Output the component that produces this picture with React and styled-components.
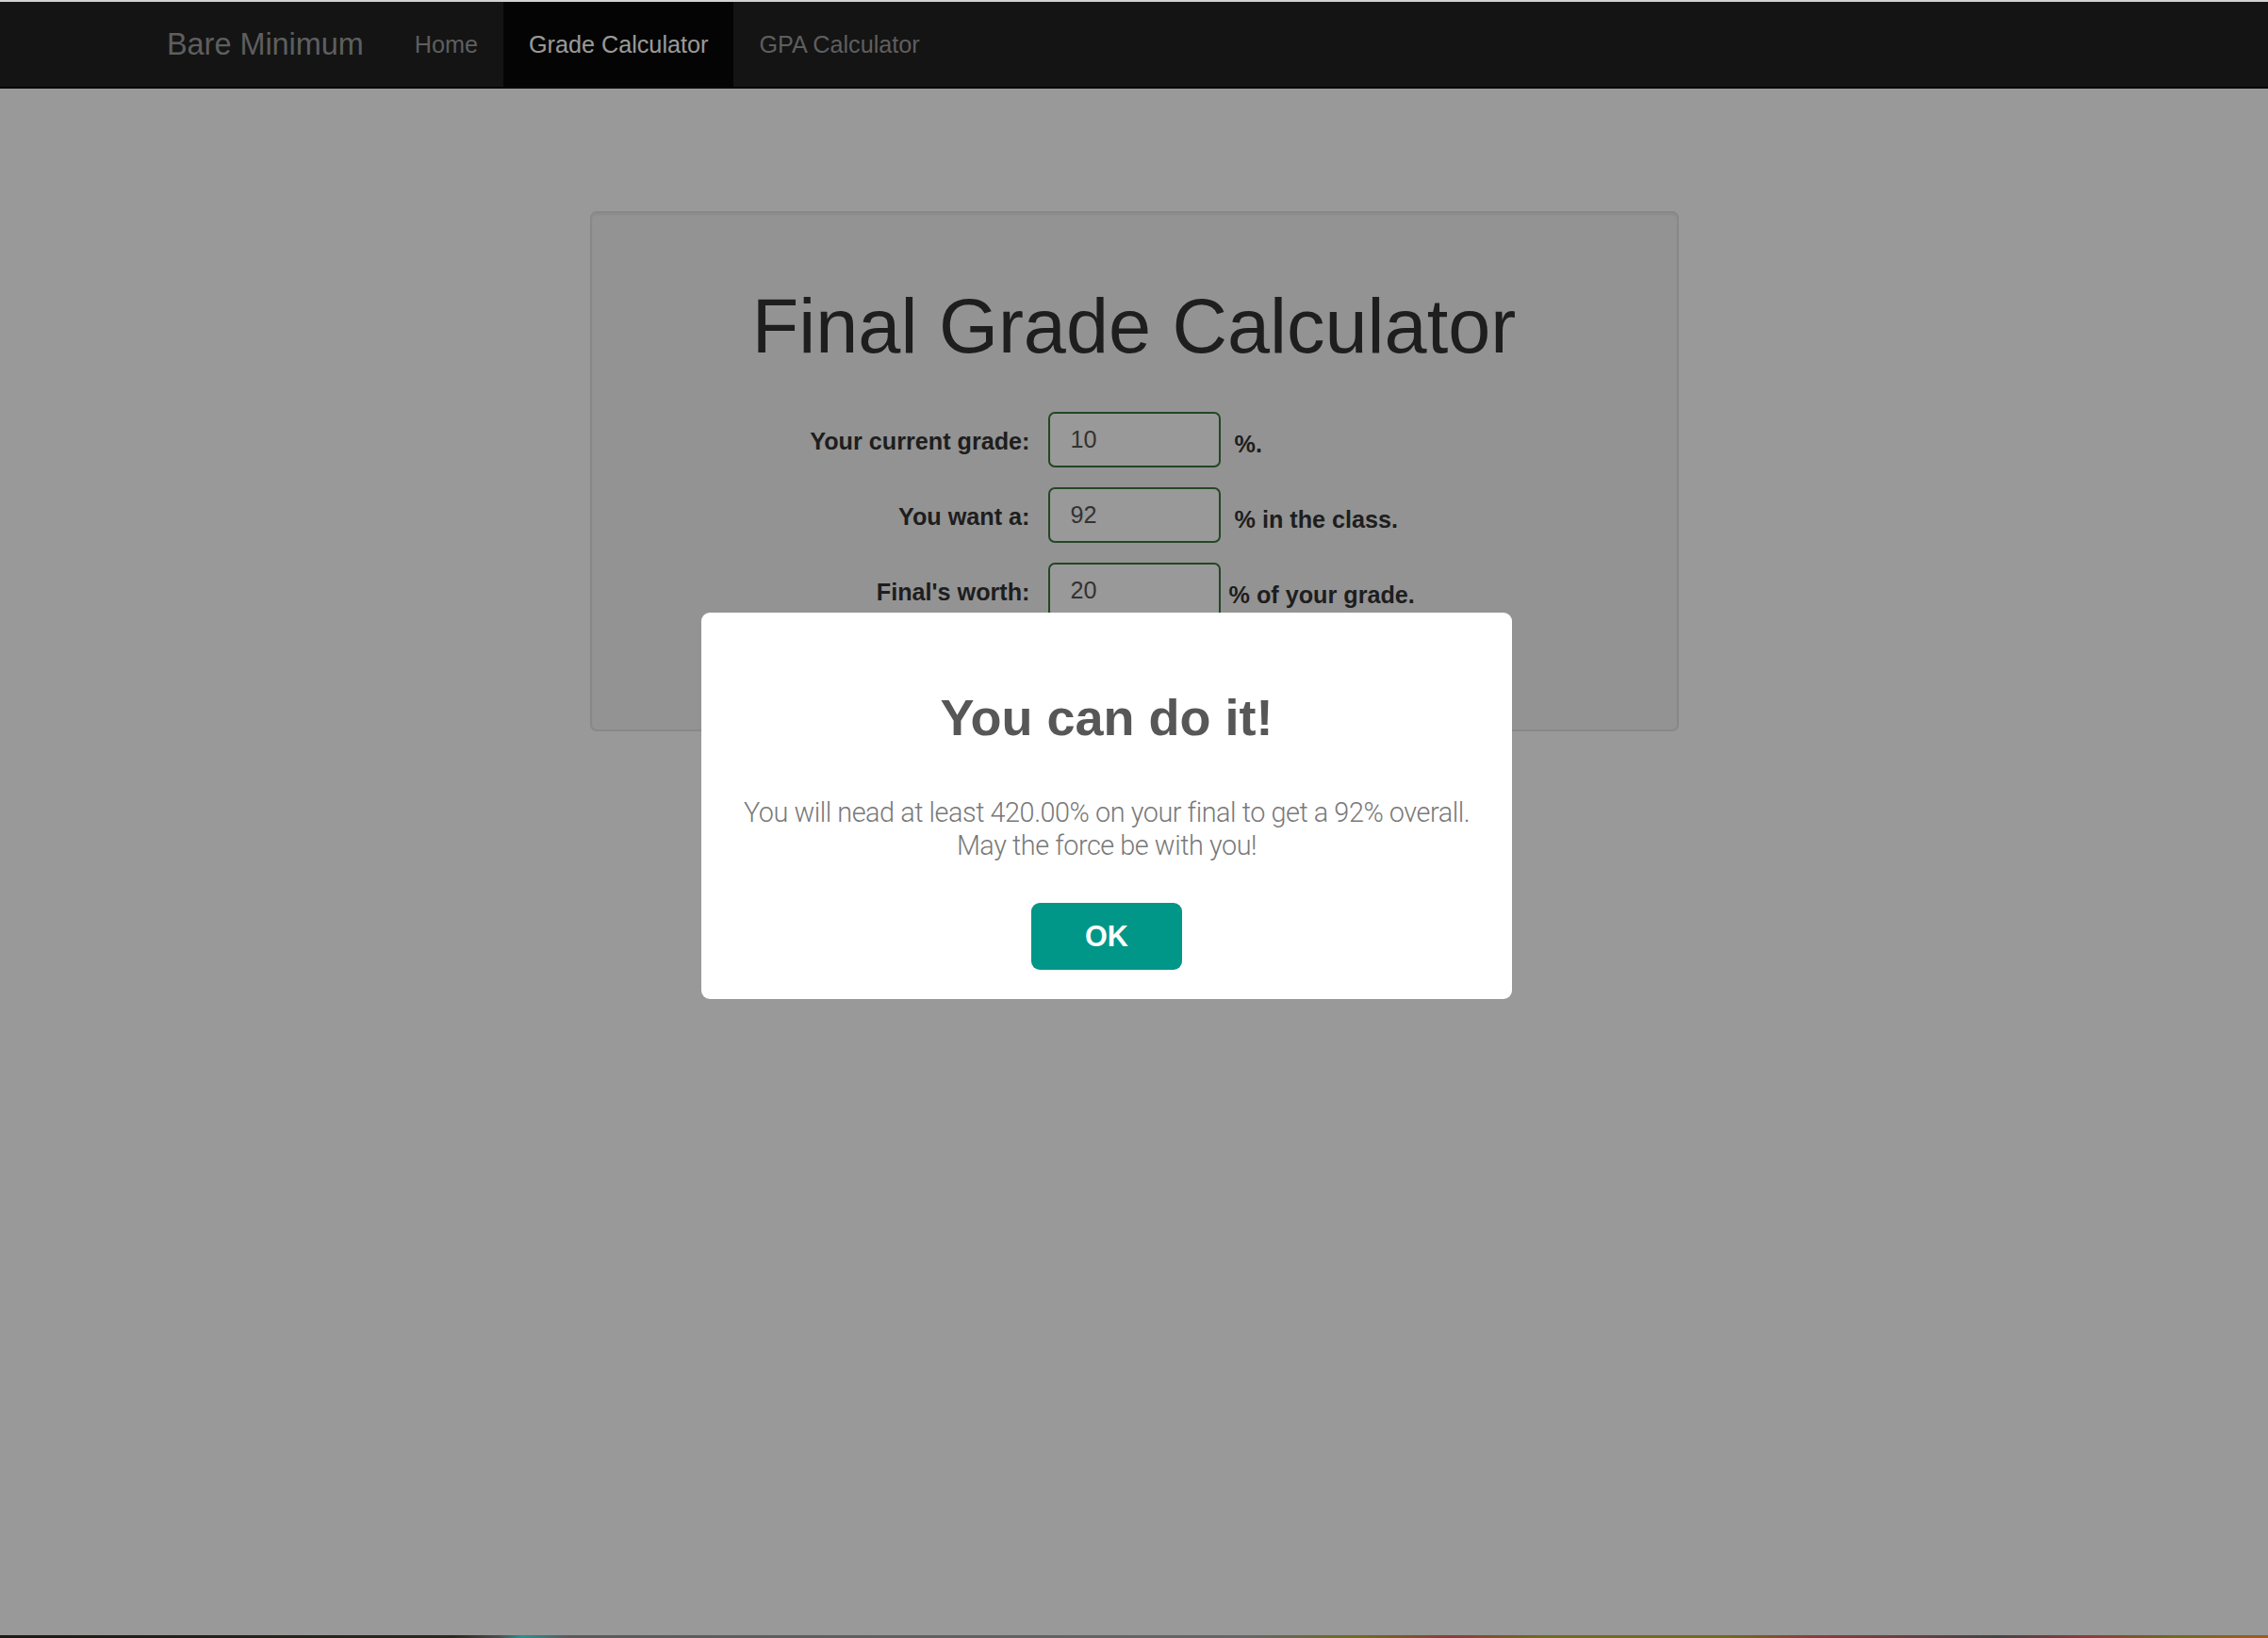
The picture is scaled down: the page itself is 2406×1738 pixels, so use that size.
import { createGlobalStyle, styled } from "styled-components";

const GlobalStyle = createGlobalStyle`
  * {
    box-sizing: border-box;
  }

  html,
  body {
    margin: 0;
    padding: 0;
    background: #fff;
  }

  body {
    border-top: 2px solid #d2d2d2;
    font-family: "Liberation Sans", Arial, sans-serif;
    font-size: 25.2px;
    line-height: 1.42857;
    color: #333;
    min-height: 1738px;
    overflow: hidden;
  }
`;

const Navbar = styled.nav`
  background: #222;
  border-bottom: 2px solid #080808;
  height: 92px;
`;

const NavInner = styled.div`
  width: 2106px;
  margin: 0 auto;
  padding: 0 27px;
  height: 100%;
  display: flex;
  align-items: stretch;
`;

const Brand = styled.a`
  display: flex;
  align-items: center;
  margin-left: -27px;
  padding: 0 27px;
  font-size: 32.4px;
  color: #9d9d9d;
  text-decoration: none;
`;

const NavList = styled.ul`
  display: flex;
  margin: 0;
  padding: 0;
  list-style: none;
`;

const NavItem = styled.li`
  display: flex;
  align-items: center;
  padding: 0 27px;
  font-size: 25.2px;
  color: ${(p) => (p.$active ? "#fff" : "#9d9d9d")};
  background: ${(p) => (p.$active ? "#080808" : "transparent")};
`;

const Well = styled.div`
  width: 1155px;
  margin: 130px auto 0;
  padding: 76px 34px 118px;
  background: #f5f5f5;
  border: 2px solid #e3e3e3;
  border-radius: 7px;
  box-shadow: inset 0 2px 2px rgba(0, 0, 0, 0.05);
`;

const Title = styled.h1`
  margin: 0;
  font-size: 81px;
  font-weight: 400;
  line-height: 89px;
  text-align: center;
  color: #333;
`;

const Form = styled.form`
  display: flex;
  flex-direction: column;
  gap: 21px;
  margin-top: 46px;
`;

const Row = styled.div`
  display: flex;
  align-items: center;
`;

const Label = styled.label`
  width: 431px;
  margin-right: 19px;
  padding-top: 2px;
  text-align: right;
  font-weight: 700;
`;

const Input = styled.input`
  width: 183px;
  height: 59px;
  padding: 0 22px;
  border: 2px solid #3c763d;
  border-radius: 7px;
  background: #fff;
  color: #555;
  font-family: "Liberation Sans", Arial, sans-serif;
  font-size: 25.2px;
  outline: none;
`;

const Suffix = styled.span`
  margin-left: ${(p) => p.$shift ?? 15}px;
  padding-top: 8px;
  font-weight: 700;
`;

const Overlay = styled.div`
  position: fixed;
  top: 2px;
  left: 0;
  right: 0;
  bottom: 0;
  background: rgba(0, 0, 0, 0.4);
  z-index: 10;
`;

const Modal = styled.div`
  position: fixed;
  top: 650px;
  left: calc(50% - 459px);
  width: 860px;
  padding: 31px;
  background: #fff;
  border-radius: 9px;
  text-align: center;
  z-index: 20;
`;

const ModalTitle = styled.h2`
  margin: 44px 0 48px;
  font-size: 54px;
  line-height: 72px;
  font-weight: 700;
  color: #575757;
`;

const ModalText = styled.p`
  margin: 0;
  font-family: Roboto, "Liberation Sans", sans-serif;
  font-size: 28.8px;
  font-weight: 300;
  line-height: 34.6px;
  letter-spacing: -0.45px;
  white-space: nowrap;
  color: #797979;
`;

const OkButton = styled.button`
  margin-top: 44px;
  padding: 18px 57px;
  border: none;
  border-radius: 9px;
  background: #009688;
  color: #fff;
  font-family: "Liberation Sans", Arial, sans-serif;
  font-size: 30.6px;
  font-weight: 700;
  line-height: 35px;
  cursor: pointer;
`;

const ScreenEdge = styled.div`
  position: fixed;
  left: 0;
  right: 0;
  bottom: 0;
  height: 3px;
  z-index: 30;
  background: linear-gradient(
    90deg,
    #1d1c12 0%,
    #2a2a1c 20%,
    #4d4d4d 22%,
    #2b8f92 23%,
    #5a5a5a 25%,
    #666 55%,
    #6f6b22 60%,
    #8a3d3d 64%,
    #6f6b22 68%,
    #6f6b22 76%,
    #8a3d3d 80%,
    #444 88%,
    #8a3d3d 92%,
    #6f6b22 96%,
    #a25a20 100%
  );
`;

const rows = [
  { label: "Your current grade:", value: "10", suffix: "%." },
  { label: "You want a:", value: "92", suffix: "% in the class." },
  { label: "Final's worth:", value: "20", suffix: "% of your grade.", shift: 9 },
];

function App() {
  return (
    <>
      <GlobalStyle />
      <Navbar>
        <NavInner>
          <Brand href="#">Bare Minimum</Brand>
          <NavList>
            <NavItem>Home</NavItem>
            <NavItem $active>Grade Calculator</NavItem>
            <NavItem>GPA Calculator</NavItem>
          </NavList>
        </NavInner>
      </Navbar>

      <Well>
        <Title>Final Grade Calculator</Title>
        <Form onSubmit={(e) => e.preventDefault()}>
          {rows.map((row) => (
            <Row key={row.label}>
              <Label>{row.label}</Label>
              <Input defaultValue={row.value} />
              <Suffix $shift={row.shift}>{row.suffix}</Suffix>
            </Row>
          ))}
        </Form>
      </Well>

      <Overlay />
      <Modal>
        <ModalTitle>You can do it!</ModalTitle>
        <ModalText>
          You will nead at least 420.00% on your final to get a 92% overall.
          <br />
          May the force be with you!
        </ModalText>
        <OkButton>OK</OkButton>
      </Modal>
      <ScreenEdge />
    </>
  );
}

export default App;
